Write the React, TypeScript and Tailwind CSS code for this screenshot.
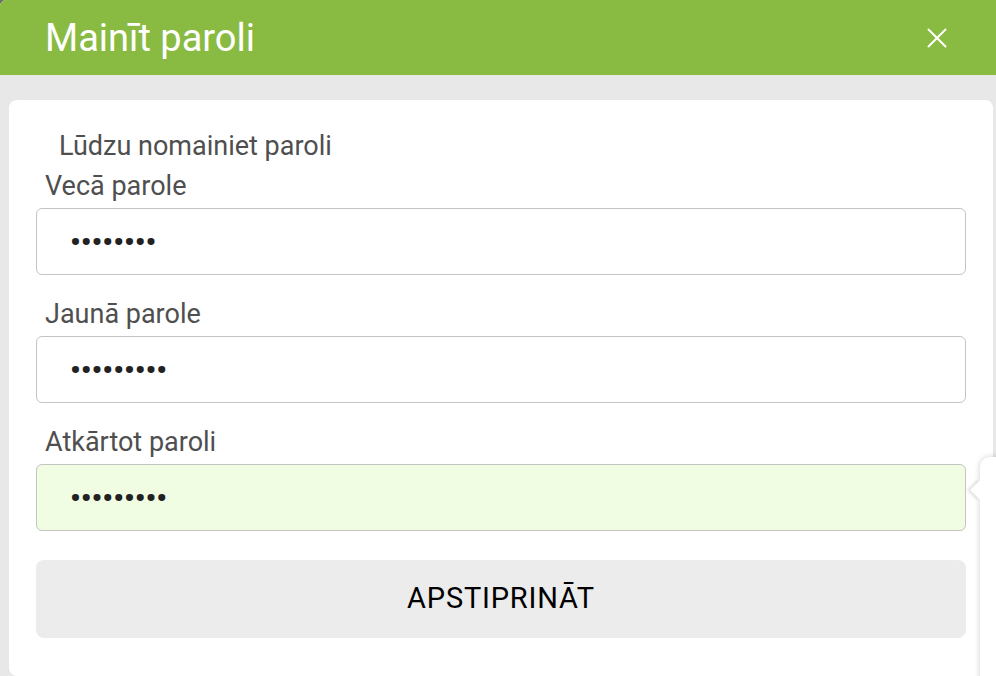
import { X } from "lucide-react";

const fields = [
  { label: "Vecā parole", value: "vecapar1", valid: false },
  { label: "Jaunā parole", value: "jaunapar1", valid: false },
  { label: "Atkārtot paroli", value: "jaunapar1", valid: true },
];

export default function App() {
  return (
    <div className="relative h-[676px] w-[996px] overflow-hidden bg-[#6b6b6b] font-['Roboto',sans-serif]">
      <div className="flex h-full flex-col overflow-hidden rounded-tl-[6px] bg-[#e8e8e8]">
        {/* Header */}
        <div className="flex h-[75px] shrink-0 items-center justify-between bg-[#89bb42] pl-[45px] pr-[42px]">
          <h1 className="text-[38px] font-normal leading-none text-white">Mainīt paroli</h1>
          <X className="h-[34px] w-[34px] text-white" strokeWidth={1.4} />
        </div>

        {/* Body */}
        <div className="flex-1 pl-[9px] pr-[3px] pt-[25px]">
          <div className="h-full rounded-[8px] bg-white px-[27px] pt-[30px]">
            <p className="pl-[23px] text-[27px] leading-[32px] text-[#4f4f4f]">Lūdzu nomainiet paroli</p>

            <div className="mt-[8px] flex flex-col gap-[23px]">
              {fields.map((f) => (
                <div key={f.label} className="flex flex-col gap-[6px]">
                  <label className="pl-[9px] text-[27px] leading-[32px] text-[#4f4f4f]">{f.label}</label>
                  <input
                    type="password"
                    defaultValue={f.value}
                    readOnly
                    className={
                      "h-[67px] w-[930px] rounded-[6px] border border-[#c4c4c4] pl-[33px] text-[30px] font-bold tracking-[0px] text-[#222] outline-none " +
                      (f.valid ? "bg-[#f1fde2]" : "bg-white")
                    }
                  />
                </div>
              ))}
            </div>

            <button className="mt-[29px] flex h-[78px] w-[930px] items-center justify-center rounded-[8px] bg-[#ececec] text-[29px] tracking-[0.8px] text-black">
              APSTIPRINĀT
            </button>
          </div>
        </div>
      </div>

      {/* Validation popup peeking from right edge */}
      <div className="absolute left-[980px] top-[457px] h-[260px] w-[200px] rounded-tl-[10px] bg-white shadow-[0_0_6px_rgba(0,0,0,0.18)]">
        <div className="absolute left-[-7px] top-[26px] h-[14px] w-[14px] rotate-45 bg-white shadow-[-2px_2px_3px_rgba(0,0,0,0.12)]" />
      </div>
    </div>
  );
}
